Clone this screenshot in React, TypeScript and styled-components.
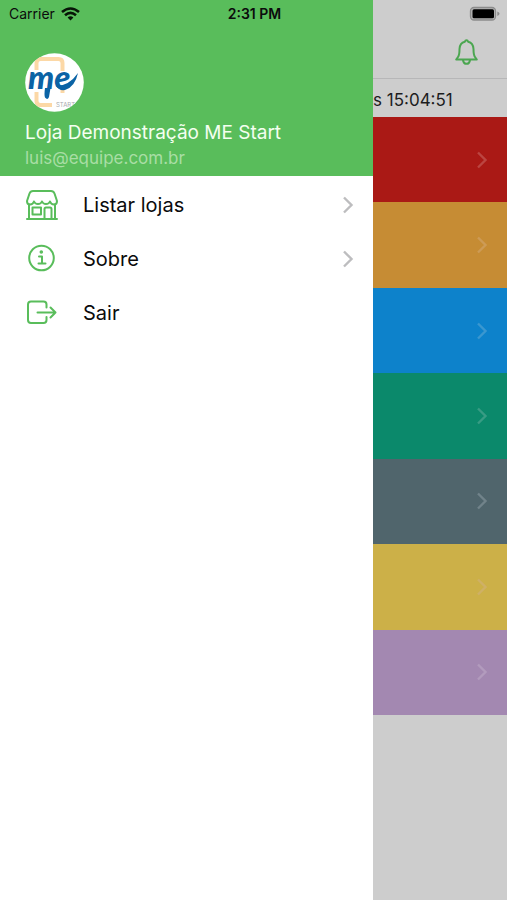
import React from "react";
import styled, { createGlobalStyle } from "styled-components";

const GlobalStyle = createGlobalStyle`
  * { box-sizing: border-box; }
  body {
    margin: 0;
    background: #cdcdcd;
    font-family: Inter, "Liberation Sans", sans-serif;
    color: #0b0b0c;
  }
  button { font: inherit; color: inherit; border: 0; padding: 0; background: none; cursor: pointer; }
`;

const GREEN = "#59bd5b";

const Screen = styled.div`
  position: relative;
  display: grid;
  grid-template-columns: minmax(0, 1fr) 134px;
  min-height: 100vh;
`;

const StatusBar = styled.header`
  position: absolute;
  top: 0;
  left: 0;
  right: 0;
  z-index: 2;
  display: grid;
  grid-template-columns: 1fr auto 1fr;
  align-items: center;
  height: 27px;
  padding: 0 7px 0 9px;
  font-size: 14px;
  line-height: 18px;
`;

const Carrier = styled.div`
  display: flex;
  align-items: center;
  gap: 6px;
`;

const Clock = styled.time`
  font-weight: 600;
`;

const Battery = styled.svg`
  justify-self: end;
`;

const Drawer = styled.aside`
  background: #fff;
`;

const Profile = styled.section`
  display: flex;
  flex-direction: column;
  align-items: flex-start;
  height: 176px;
  padding: 53px 25px 0;
  background: ${GREEN};
  white-space: nowrap;
`;

const Avatar = styled.svg`
  display: block;
  margin-bottom: 7px;
`;

const StoreName = styled.h1`
  margin: 0;
  font-size: 19px;
  font-weight: 400;
  line-height: 26px;
  color: #f4fff0;
`;

const Email = styled.p`
  margin: 0;
  font-size: 17px;
  line-height: 24px;
  color: #a9dea5;
`;

const Menu = styled.nav`
  display: flex;
  flex-direction: column;
  padding-top: 2px;
`;

const MenuItem = styled.button`
  display: grid;
  grid-template-columns: 34px 1fr auto;
  column-gap: 24px;
  align-items: center;
  height: 54px;
  padding: 0 19px 0 25px;
  font-size: 20px;
  text-align: left;
`;

const LineIcon = styled.svg<{ $color?: string }>`
  display: block;
  fill: none;
  stroke: ${(p) => p.$color ?? GREEN};
  stroke-width: 2;
  stroke-linecap: round;
  stroke-linejoin: round;
`;

const ChevronMark = styled.svg<{ $color: string }>`
  display: block;
  fill: none;
  stroke: ${(p) => p.$color};
  stroke-width: 2.4;
`;

const Home = styled.main`
  overflow: hidden;
  background: #cdcdcd;
`;

const NavBar = styled.div`
  display: flex;
  justify-content: flex-end;
  height: 79px;
  padding: 37px 26px 0 0;
  border-bottom: 1px solid #b7b7b8;
`;

const IconButton = styled.button`
  width: 30px;
  height: 30px;
`;

const Updated = styled.p`
  margin: 0;
  height: 38px;
  font-size: 17px;
  line-height: 42px;
  color: #1c1c1d;
  white-space: nowrap;
`;

const Tiles = styled.div`
  display: grid;
  grid-template-rows: repeat(7, 1fr);
  height: 598px;
`;

const Tile = styled.button<{ $fill: string }>`
  display: flex;
  align-items: center;
  justify-content: flex-end;
  padding-right: 19px;
  background: ${(p) => p.$fill};
`;

const Chevron = ({ color }: { color: string }) => (
  <ChevronMark $color={color} width="12" height="18" viewBox="0 0 12 18" aria-hidden="true">
    <path d="M2 1.500 9.500 9 2 16.500" />
  </ChevronMark>
);

const StoreIcon = () => (
  <LineIcon width="34" height="32" viewBox="0 0 34 32" aria-hidden="true">
    <path d="M8 2h18q2.500 0 3.500 2.500L32 12q0 3.500-3 3.500T25 12.500q-1 2.500-4 2.500t-4-2.500q-1 2.500-4 2.500t-4-2.500q-1 3-4 3T2 12L4.500 4.500Q5.500 2 8 2Z" />
    <path d="M4 15.500V30M30 15.500V30M2 30H32M19.500 29.500V20q0-1.500 1.500-1.500h4q1.500 0 1.500 1.500V29.500M7.500 18.500H16V25.500H7.500Z" />
  </LineIcon>
);

const InfoIcon = () => (
  <LineIcon width="34" height="32" viewBox="0 0 34 32" aria-hidden="true">
    <circle cx="16.500" cy="15" r="12.300" />
    <path d="M14 13.500h3V20.500M13.500 20.500h7" />
    <circle cx="16.300" cy="9" r=".8" fill={GREEN} />
  </LineIcon>
);

const ExitIcon = () => (
  <LineIcon width="34" height="32" viewBox="0 0 34 32" aria-hidden="true">
    <path d="M21.500 10.500V7.500q0-3-3-3H6q-3 0-3 3v15.500q0 3 3 3h12.500q3 0 3-3V20M12.500 15.500H30.500M25.500 10.500l5 5-5 5" />
  </LineIcon>
);

const BellIcon = () => (
  <LineIcon $color="#4ba650" width="30" height="30" viewBox="0 0 30 30" aria-hidden="true">
    <path d="M15.500 3.200Q14.300 3.200 13.800 4.800Q8.800 6 8.500 12Q8.500 18 7 20L5.200 22.500H25.800L24 20Q22.500 18 22.500 12Q22.200 6 17.200 4.800Q16.700 3.200 15.500 3.200ZM12 23Q12.500 26.800 15.500 26.800T19 23" />
  </LineIcon>
);

const Logo = () => (
  <Avatar width="60" height="60" viewBox="0 0 60 60" role="img" aria-label="ME Start">
    <defs>
      <clipPath id="disc"><circle cx="29.500" cy="29.500" r="29.300" /></clipPath>
    </defs>
    <circle cx="29.500" cy="29.500" r="29.300" fill="#fff" />
    <g clipPath="url(#disc)">
      <path d="M11.500 17V10q0-4 4-4h18q4 0 4 4v8M37.500 36v4M11.500 39v9q0 4 4 4H27" fill="none" stroke="#fcd8a6" strokeWidth="4" />
      <text x="31" y="54" fontFamily="Inter, sans-serif" fontSize="6" fill="#a7aaae">START</text>
      <text x="3" y="36" fontFamily="Lato, sans-serif" fontSize="33" fontWeight="900" fontStyle="italic" fill="#0b63a5">me</text>
      <path d="M20 35 25.500 35 24 44Q22.500 47.500 20 44.500Q19 42 20 35ZM31 33Q44 33 53 20Q50 34 40 37Q34 38 31 33Z" fill="#0b63a5" />
    </g>
  </Avatar>
);

const menu = [
  { label: "Listar lojas", icon: <StoreIcon />, more: true },
  { label: "Sobre", icon: <InfoIcon />, more: true },
  { label: "Sair", icon: <ExitIcon />, more: false },
];

const tiles = [
  { fill: "#aa1915", mark: "#bb4541" },
  { fill: "#c68c34", mark: "#cd9b56" },
  { fill: "#0d82cb", mark: "#3a97d0" },
  { fill: "#0b896b", mark: "#389c84" },
  { fill: "#50656c", mark: "#71838a" },
  { fill: "#ccb048", mark: "#cfb066" },
  { fill: "#a388b1", mark: "#b29bbd" },
];

export default function App() {
  return (
    <>
      <GlobalStyle />
      <Screen>
        <StatusBar>
          <Carrier>
            Carrier
            <svg width="19" height="14" viewBox="0 0 19 14" fill="none" stroke="#071507" strokeWidth="2.600" aria-hidden="true">
              <path d="M1 5Q9.500-2 18 5M4 8.300Q9.500 3.600 15 8.300" />
              <path d="M6.600 10.500Q9.500 8 12.400 10.500L9.500 13.500Z" fill="#071507" stroke="none" />
            </svg>
          </Carrier>
          <Clock>2:31 PM</Clock>
          <Battery width="31" height="16" viewBox="0 0 31 16" aria-hidden="true">
            <rect x="1.500" y="1.500" width="25" height="12.500" rx="3.500" fill="#b5b5b5" stroke="#8c8c8c" strokeWidth="1.300" />
            <rect x="3.500" y="3.300" width="21.500" height="9" rx="1.500" fill="#000" />
            <path d="M28.300 5.500Q30.500 6.500 30.500 7.800T28.300 10Z" fill="#8c8c8c" />
          </Battery>
        </StatusBar>
        <Drawer>
          <Profile>
            <Logo />
            <StoreName>Loja Demonstração ME Start</StoreName>
            <Email>luis@equipe.com.br</Email>
          </Profile>
          <Menu>
            {menu.map((m) => (
              <MenuItem key={m.label} type="button">
                {m.icon}
                <span>{m.label}</span>
                {m.more && <Chevron color="#bdbdbf" />}
              </MenuItem>
            ))}
          </Menu>
        </Drawer>
        <Home>
          <NavBar>
            <IconButton type="button" aria-label="Notificações">
              <BellIcon />
            </IconButton>
          </NavBar>
          <Updated>s 15:04:51</Updated>
          <Tiles>
            {tiles.map((t, i) => (
              <Tile key={t.fill} $fill={t.fill} type="button" aria-label={`Item ${i + 1}`}>
                <Chevron color={t.mark} />
              </Tile>
            ))}
          </Tiles>
        </Home>
      </Screen>
    </>
  );
}
